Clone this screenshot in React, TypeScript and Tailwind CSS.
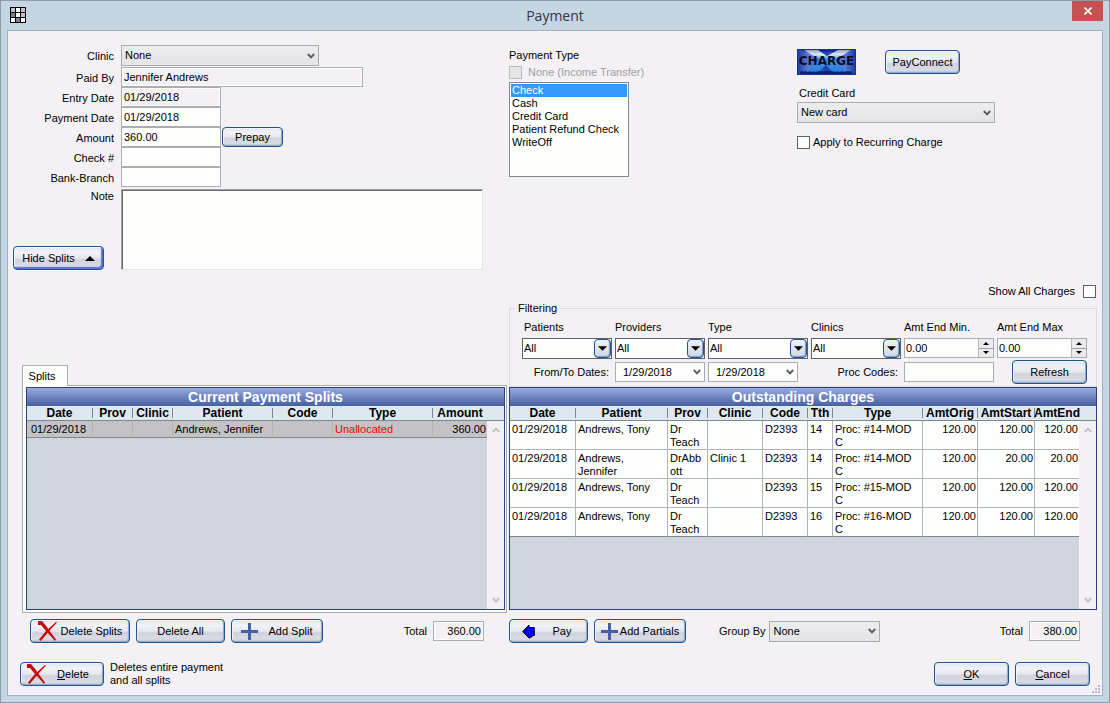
import clsx from "clsx";
import { useState, type ButtonHTMLAttributes, type InputHTMLAttributes, type ReactNode } from "react";

interface Column {
  name: string;
  width: number;
  align?: "right";
}

const SPLIT_COLUMNS: Column[] = [
  { name: "Date", width: 66 },
  { name: "Prov", width: 40 },
  { name: "Clinic", width: 40 },
  { name: "Patient", width: 100 },
  { name: "Code", width: 60 },
  { name: "Type", width: 100 },
  { name: "Amount", width: 54, align: "right" },
];

const SPLITS = [["01/29/2018", "", "", "Andrews, Jennifer", "", "Unallocated", "360.00"]];

const CHARGE_COLUMNS: Column[] = [
  { name: "Date", width: 66 },
  { name: "Patient", width: 92 },
  { name: "Prov", width: 40 },
  { name: "Clinic", width: 55 },
  { name: "Code", width: 45 },
  { name: "Tth", width: 25 },
  { name: "Type", width: 90 },
  { name: "AmtOrig", width: 55, align: "right" },
  { name: "AmtStart", width: 57, align: "right" },
  { name: "AmtEnd", width: 44, align: "right" },
];

const CHARGES = [
  ["01/29/2018", "Andrews, Tony", "Dr Teach", "", "D2393", "14", "Proc: #14-MOD C", "120.00", "120.00", "120.00"],
  ["01/29/2018", "Andrews, Jennifer", "DrAbbott", "Clinic 1", "D2393", "14", "Proc: #14-MOD C", "120.00", "20.00", "20.00"],
  ["01/29/2018", "Andrews, Tony", "Dr Teach", "", "D2393", "15", "Proc: #15-MOD C", "120.00", "120.00", "120.00"],
  ["01/29/2018", "Andrews, Tony", "Dr Teach", "", "D2393", "16", "Proc: #16-MOD C", "120.00", "120.00", "120.00"],
];

const PAYMENT_TYPES = ["Check", "Cash", "Credit Card", "Patient Refund Check", "WriteOff"];

const Chevron = ({ className, flip }: { className?: string; flip?: boolean }) => (
  <svg viewBox="0 0 8 6" className={clsx("h-1.5 w-2", flip && "rotate-180", className)} fill="none" stroke="currentColor">
    <path d="M.8 1 4 4.4 7.2 1" strokeWidth="2" />
  </svg>
);

const Triangle = ({ className, up }: { className?: string; up?: boolean }) => (
  <svg viewBox="0 0 10 5" className={clsx(up && "rotate-180", className)} fill="currentColor">
    <path d="M0 0h10L5 5z" />
  </svg>
);

const DeleteIcon = () => (
  <svg viewBox="0 0 20 20" className="h-5 w-5 shrink-0" fill="#c80a0a">
    <path d="M0 0h4l5 6 2 3 7 9.500-1 1.500-3-3.500L8 10 3 4H0z" />
    <path d="M18 1l1 .6-6.500 7L4 18.500 2.500 20 1 18.500 8 10z" />
  </svg>
);

const PlusIcon = () => (
  <svg viewBox="0 0 17 17" className="h-[17px] w-[17px] shrink-0" fill="#46609f">
    <path d="M7 0h3v7h7v3h-7v7H7v-7H0V7h7z" />
  </svg>
);

const XChargeLogo = () => (
  <svg viewBox="0 0 59 26" className="h-[26px] w-[59px]" role="img" aria-label="X-Charge">
    <defs>
      <linearGradient id="xcBack" x1="0" y1="0" x2="1" y2="0">
        <stop offset="0" stopColor="#173a9c" />
        <stop offset=".2" stopColor="#5f7fd6" />
        <stop offset=".5" stopColor="#1b3fae" />
        <stop offset=".8" stopColor="#5f7fd6" />
        <stop offset="1" stopColor="#173a9c" />
      </linearGradient>
      <linearGradient id="xcMark" x1="0" y1="0" x2="0" y2="1">
        <stop offset="0" stopColor="#9a9fb0" />
        <stop offset=".2" stopColor="#e4ecf4" />
        <stop offset=".4" stopColor="#3f97ea" />
        <stop offset="1" stopColor="#2a7de0" />
      </linearGradient>
    </defs>
    <rect width="59" height="26" fill="url(#xcBack)" />
    <path d="M0 0h59l-9 3H9zM0 26h59l-9-4H9z" fill="#132a8c" />
    <path d="M7 1h14l9 6L41 1h13L38 11l12 12H36l-7-7-8 7H9l14-12z" fill="url(#xcMark)" />
    <text x="29.500" y="16" textAnchor="middle" fill="#0a0d28" fontFamily="DejaVu Sans, sans-serif" fontWeight="700" fontSize="12">
      CHARGE
    </text>
    <path d="M3 23.500h53" stroke="#0b1d78" strokeWidth="2" strokeDasharray="4 1 2 1" />
    <rect x=".5" y=".5" width="58" height="25" fill="none" stroke="#1a2f94" />
  </svg>
);

interface PushButtonProps extends ButtonHTMLAttributes<HTMLButtonElement> {
  focused?: boolean;
}

const PushButton = ({ className, focused, ...props }: PushButtonProps) => (
  <button
    type="button"
    className={clsx(
      "flex items-center justify-center rounded-[4px] border border-[#1f5589]",
      "bg-[linear-gradient(#dfe7ef_0%,#f0f2f5_25%,#e6e8ee_50%,#d0d1de_58%,#dadbe2_85%,#bfc8dc_100%)]",
      focused
        ? "shadow-[inset_-2px_-2px_1px_#5b6ee0,inset_1px_1px_0_#f6f9fc]"
        : "shadow-[inset_-1px_-1px_1px_#8fa6cf,inset_1px_1px_0_#eef4fa]",
      className
    )}
    {...props}
  />
);

const TextBox = ({ className, ...props }: InputHTMLAttributes<HTMLInputElement>) => (
  <input
    className={clsx(
      "h-5 min-w-0 border border-[#abadb3] bg-[#fdfffd] px-0.5 outline-none read-only:bg-[#f3f1f4] read-only:shadow-[inset_0_0_0_1px_#fff]",
      className
    )}
    {...props}
  />
);

interface DropDownProps {
  id: string;
  options: string[];
  variant?: "system" | "date" | "combo";
  className?: string;
}

const DropDown = ({ id, options, variant = "system", className }: DropDownProps) => (
  <div className={clsx("grid min-w-0 items-center", className)}>
    <select
      id={id}
      className={clsx(
        "col-start-1 row-start-1 w-full appearance-none border outline-none",
        variant === "system" && "h-[21px] border-[#acacac] bg-[linear-gradient(#ededf0,#e4e5e6)] px-[3px]",
        variant === "date" && "h-5 border-[#abadb3] bg-[#fdfffd] px-[7px]",
        variant === "combo" && "h-[21px] border-[#5f6068] bg-[#fdfffd] px-px"
      )}
    >
      {options.map((option) => (
        <option key={option}>{option}</option>
      ))}
    </select>
    {variant === "combo" ? (
      <span className="pointer-events-none col-start-1 row-start-1 mr-px flex h-[19px] w-[17px] items-center justify-center justify-self-end rounded-[4px] border border-[#1f5589] bg-[linear-gradient(#eef2f7,#cfd6e6)] shadow-[inset_-1px_-1px_1px_#7f9bcb]">
        <Triangle className="h-[5px] w-[9px]" />
      </span>
    ) : (
      <Chevron className="pointer-events-none col-start-1 row-start-1 mr-1 justify-self-end text-[#5c5d66]" />
    )}
  </div>
);

const Spinner = ({ id }: { id: string }) => {
  const [value, setValue] = useState(0);

  return (
    <div className="flex h-5 min-w-0 border border-[#abadb3] bg-[#fdfffd]">
      <input
        id={id}
        className="min-w-0 flex-1 px-px outline-none"
        value={value.toFixed(2)}
        onChange={(e) => setValue(Number(e.target.value) || 0)}
      />
      <div className="flex w-[15px] flex-col border-l border-[#b4b5b9] text-black">
        <button
          type="button"
          aria-label="Increase"
          className="flex flex-1 items-center justify-center border-b border-[#9fa0a5] bg-[#ebebee]"
          onClick={() => setValue(value + 1)}
        >
          <Triangle up className="h-[3px] w-[6px]" />
        </button>
        <button
          type="button"
          aria-label="Decrease"
          className="flex flex-1 items-center justify-center bg-[#ebebee]"
          onClick={() => setValue(value - 1)}
        >
          <Triangle className="h-[3px] w-[6px]" />
        </button>
      </div>
    </div>
  );
};

const CheckBox = (props: InputHTMLAttributes<HTMLInputElement>) => (
  <input
    type="checkbox"
    className="h-[13px] w-[13px] shrink-0 appearance-none border border-[#5f6068] bg-[#fdfffd] checked:bg-[#3399ff] disabled:border-[#bcbcbf] disabled:bg-[#e6e6e6]"
    {...props}
  />
);

const FormRow = ({ id, label, children }: { id: string; label: string; children: ReactNode }) => (
  <div className="flex items-center">
    <label htmlFor={id} className="mr-[7px] w-[106px] shrink-0 pt-0.5 text-right">
      {label}
    </label>
    {children}
  </div>
);

interface DataGridProps {
  title: string;
  columns: Column[];
  rows: string[][];
  selected?: boolean;
}

const DataGrid = ({ title, columns, rows, selected }: DataGridProps) => (
  <section className="flex min-h-[223px] flex-1 flex-col border border-[#2b4478] bg-[#ced5dc]">
    <h2 className="h-[18px] bg-[linear-gradient(#98aae0,#7389c6_45%,#46609f)] text-center text-[14px] leading-[19px] font-bold text-white">
      {title}
    </h2>
    <div className="flex flex-1 bg-[linear-gradient(#dde8f1_14px,transparent_14px)]">
      <div className="min-w-0 flex-1">
        <table className="w-full table-fixed border-separate border-spacing-0">
          <colgroup>
            {columns.map((column) => (
              <col key={column.name} style={{ width: column.width }} />
            ))}
          </colgroup>
          <thead>
            <tr>
              {columns.map((column, i) => (
                <th
                  key={column.name}
                  className="h-[15px] overflow-visible border-b border-[#80858f] p-0 text-[12px] leading-[14px] font-bold whitespace-nowrap"
                >
                  <div className={clsx("flex h-2.5 items-center justify-center", i < columns.length - 1 && "border-r border-[#80858f]")}>
                    {column.name}
                  </div>
                </th>
              ))}
            </tr>
          </thead>
          <tbody>
            {rows.map((row, r) => (
              <tr key={r} className={selected ? "bg-[#c4c2c4]" : "bg-[#fdfffd]"}>
                {row.map((cell, i) => (
                  <td
                    key={i}
                    className={clsx(
                      "border-b pt-0.5 align-top break-words",
                      selected ? "border-r-[#b3b2b4] border-b-[#80858f] pb-px" : "border-[#b4b4b8]",
                      !selected && r === rows.length - 1 && "border-b-[#80858f]",
                      i < columns.length - 1 && "border-r",
                      columns[i].align ? "pr-px text-right" : "pr-1 pl-0.5",
                      selected && i === 0 && "text-center",
                      cell === "Unallocated" && "text-[#ff0000]"
                    )}
                  >
                    {cell}
                  </td>
                ))}
              </tr>
            ))}
          </tbody>
        </table>
      </div>
      <div className="mt-[14px] flex w-[17px] flex-col items-center justify-between border-t border-[#80858f] bg-[#f3f1f4] py-1.5 text-[#c2c2c6]">
        <Chevron flip />
        <Chevron />
      </div>
    </div>
  </section>
);

const PaymentForm = () => (
  <div className="flex flex-col pt-3.5">
    <FormRow id="clinic" label="Clinic">
      <DropDown id="clinic" options={["None"]} className="w-[198px]" />
    </FormRow>
    <div className="mt-px">
      <FormRow id="paidBy" label="Paid By">
        <TextBox id="paidBy" className="w-[242px]" defaultValue="Jennifer Andrews" readOnly />
      </FormRow>
      <FormRow id="entryDate" label="Entry Date">
        <TextBox id="entryDate" className="w-[100px]" defaultValue="01/29/2018" readOnly />
      </FormRow>
      <FormRow id="paymentDate" label="Payment Date">
        <TextBox id="paymentDate" className="w-[100px]" defaultValue="01/29/2018" />
      </FormRow>
      <FormRow id="amount" label="Amount">
        <TextBox id="amount" className="w-[100px]" defaultValue="360.00" />
        <PushButton className="ml-px h-5 w-[61px]">Prepay</PushButton>
      </FormRow>
      <FormRow id="checkNum" label="Check #">
        <TextBox id="checkNum" className="w-[100px]" />
      </FormRow>
      <FormRow id="bankBranch" label="Bank-Branch">
        <TextBox id="bankBranch" className="w-[100px]" />
      </FormRow>
    </div>
    <div className="mt-0.5 flex">
      <div className="mr-[7px] flex w-[106px] flex-col justify-between">
        <label htmlFor="note" className="pt-px text-right">
          Note
        </label>
        <PushButton focused className="ml-[5px] h-6 w-[91px] gap-2.5">
          Hide Splits
          <Triangle up className="h-[5px] w-[10px]" />
        </PushButton>
      </div>
      <textarea
        id="note"
        className="block h-[81px] w-[362px] resize-none border border-[#e3e3e3] border-t-[#a0a0a3] border-l-[#a0a0a3] bg-[#fdfffd] shadow-[inset_1px_1px_0_#696a70] outline-none"
      />
    </div>
  </div>
);

const PaymentTypePicker = () => (
  <div className="w-[288px] pt-[18px]">
    <label htmlFor="paymentType" className="block">
      Payment Type
    </label>
    <label className="mt-1 flex items-center gap-1.5 text-[#a0a0a3]">
      <CheckBox disabled />
      None (Income Transfer)
    </label>
    <select
      id="paymentType"
      size={7}
      defaultValue="Check"
      className="mt-[3px] block h-[95px] w-[120px] overflow-hidden border border-[#828790] bg-[#fdfffd] p-px outline-none"
    >
      {PAYMENT_TYPES.map((type) => (
        <option
          key={type}
          className="h-[13px] min-h-0 px-px py-0 leading-[13px] checked:bg-[linear-gradient(#3399ff,#3399ff)] checked:text-white"
        >
          {type}
        </option>
      ))}
    </select>
  </div>
);

const CreditCardPanel = () => (
  <div className="pt-[18px]">
    <div className="flex items-center gap-[29px]">
      <XChargeLogo />
      <PushButton className="h-6 w-[75px]">PayConnect</PushButton>
    </div>
    <label htmlFor="creditCard" className="mt-3 block pl-0.5">
      Credit Card
    </label>
    <DropDown id="creditCard" options={["New card"]} className="mt-0.5 w-[198px]" />
    <label className="mt-[13px] flex items-center gap-[3px]">
      <CheckBox />
      Apply to Recurring Charge
    </label>
  </div>
);

const Filters = () => (
  <fieldset className="mt-[3px] border border-[#dcdcdf] pr-[9px] pb-0.5 pl-3">
    <legend className="-ml-1.5 px-0.5 leading-[14px]">Filtering</legend>
    <div className="mt-1.5 grid grid-cols-[90fr_90fr_100fr_90fr_90fr_90fr] gap-x-[3px]">
      <label htmlFor="patients" className="mb-1 pl-0.5">
        Patients
      </label>
      <label htmlFor="providers">Providers</label>
      <label htmlFor="type">Type</label>
      <label htmlFor="clinics">Clinics</label>
      <label htmlFor="amtMin">Amt End Min.</label>
      <label htmlFor="amtMax">Amt End Max</label>

      <DropDown id="patients" variant="combo" options={["All"]} />
      <DropDown id="providers" variant="combo" options={["All"]} />
      <DropDown id="type" variant="combo" options={["All"]} />
      <DropDown id="clinics" variant="combo" options={["All"]} />
      <Spinner id="amtMin" />
      <Spinner id="amtMax" />
    </div>
    <div className="mt-px grid h-6 grid-cols-[90fr_90fr_100fr_90fr_90fr_90fr] items-center gap-x-[3px]">
      <label htmlFor="fromDate" className="pr-[3px] text-right whitespace-nowrap">
        From/To Dates:
      </label>
      <DropDown id="fromDate" variant="date" options={["1/29/2018"]} />
      <DropDown id="toDate" variant="date" options={["1/29/2018"]} className="w-[90%]" />
      <label htmlFor="procCodes" className="pr-[3px] text-right">
        Proc Codes:
      </label>
      <TextBox id="procCodes" />
      <PushButton className="h-6 w-[75px] justify-self-end">Refresh</PushButton>
    </div>
  </fieldset>
);

export default function App() {
  return (
    <div className="flex min-h-screen w-full flex-col border border-[#8f9ba6] bg-[#c5d6e3] font-['Liberation_Sans',Arial,sans-serif] text-[11px] leading-[13px] text-black">
      <header className="grid h-[29px] grid-cols-[1fr_auto_1fr]">
        <svg viewBox="0 0 16 16" className="mt-1.5 ml-[9px] h-4 w-4">
          <path d="M0 0h16v16H0z" />
          <path d="M1 1h4v4H1zM11 1h4v4h-4zM11 6h4v4h-4z" fill="#c3c3cb" />
          <path d="M6 1h4v4H6zM6 6h4v4H6zM1 11h4v4H1zM11 11h4v4h-4z" fill="#fff" />
          <path d="M1 6h4v4H1zM6 11h4v4H6z" fill="#7d7d8c" />
        </svg>
        <h1 className="font-['Open_Sans','Noto_Sans',sans-serif] text-[14px] leading-[29px] text-[#33373d]">Payment</h1>
        <button
          type="button"
          aria-label="Close"
          className="mr-1.5 flex h-5 w-[31px] items-center justify-center justify-self-end bg-[#c75050]"
        >
          <svg viewBox="0 0 8 8" className="h-2 w-2" stroke="#fff" strokeWidth="1.700">
            <path d="M.5.5l7 7M7.500.5l-7 7" />
          </svg>
        </button>
      </header>

      <main className="relative mx-1.5 mb-1.5 flex flex-1 flex-col border border-[#9fb0c8] bg-[#f3f1f4] pb-[9px]">
        <div className="grid flex-1 grid-cols-[501fr_588fr] pr-[5px]">
          <div className="flex flex-col">
            <PaymentForm />
            <div className="mt-[95px] mr-0.5 ml-3.5 flex flex-1 flex-col">
              <div role="tablist" className="flex">
                <button
                  type="button"
                  role="tab"
                  aria-selected
                  className="z-10 -mb-px h-[21px] w-[46px] border border-b-0 border-[#acacb0] bg-[#fdfffd] pr-1.5"
                >
                  Splits
                </button>
              </div>
              <div className="flex flex-1 flex-col border border-[#acacb0] bg-[#fdfffd] pt-px pr-px pb-0.5 pl-[3px]">
                <DataGrid title="Current Payment Splits" columns={SPLIT_COLUMNS} rows={SPLITS} selected />
              </div>
            </div>
            <div className="mt-1.5 flex items-center gap-1.5 pl-[22px]">
              <PushButton className="h-6 w-[100px] gap-[3px]">
                <DeleteIcon />
                Delete Splits
              </PushButton>
              <PushButton className="h-6 w-[89px]">Delete All</PushButton>
              <PushButton className="h-6 w-[92px] gap-2.5">
                <PlusIcon />
                Add Split
              </PushButton>
              <label htmlFor="splitTotal" className="ml-auto">
                Total
              </label>
              <TextBox id="splitTotal" className="mr-[25px] w-[51px] text-right" defaultValue="360.00" readOnly />
            </div>
          </div>

          <div className="flex flex-col">
            <div className="flex">
              <PaymentTypePicker />
              <CreditCardPanel />
            </div>
            <label className="mt-[108px] mr-px flex items-center gap-2 self-end">
              Show All Charges
              <CheckBox />
            </label>
            <Filters />
            <DataGrid title="Outstanding Charges" columns={CHARGE_COLUMNS} rows={CHARGES} />
            <div className="mt-[9px] flex items-center gap-1.5">
              <PushButton className="h-6 w-[79px] gap-[18px] pr-1">
                <svg viewBox="0 0 13 15" className="h-[15px] w-[13px]">
                  <path d="M.7 7.500 7 1v2.500h5.300v8H10V13H8v1H7z" fill="#0000ff" stroke="#000" />
                </svg>
                Pay
              </PushButton>
              <PushButton className="h-6 w-[92px] gap-0.5">
                <PlusIcon />
                Add Partials
              </PushButton>
              <div className="ml-[27px] flex items-center gap-1">
                <label htmlFor="groupBy">Group By</label>
                <DropDown id="groupBy" options={["None"]} className="w-[111px]" />
              </div>
              <label htmlFor="chargeTotal" className="ml-auto">
                Total
              </label>
              <TextBox id="chargeTotal" className="mr-[17px] w-[51px] text-right" defaultValue="380.00" readOnly />
            </div>
          </div>
        </div>

        <footer className="mt-[19px] flex h-6 items-center gap-1.5 pr-3 pl-3">
          <PushButton className="h-6 w-[84px] gap-2.5 pr-2">
            <DeleteIcon />
            <span>
              <u>D</u>elete
            </span>
          </PushButton>
          <p className="w-[120px]">Deletes entire payment and all splits</p>
          <PushButton className="ml-auto h-6 w-[75px]">
            <u>O</u>K
          </PushButton>
          <PushButton className="h-6 w-[75px]">
            <u>C</u>ancel
          </PushButton>
        </footer>
        <svg viewBox="0 0 8 8" className="absolute right-0.5 bottom-0.5 h-2 w-2" fill="#bcbcc2">
          <path d="M6 0h2v2H6zM3 3h2v2H3zM6 3h2v2H6zM0 6h2v2H0zM3 6h2v2H3zM6 6h2v2H6z" />
        </svg>
      </main>
    </div>
  );
}
